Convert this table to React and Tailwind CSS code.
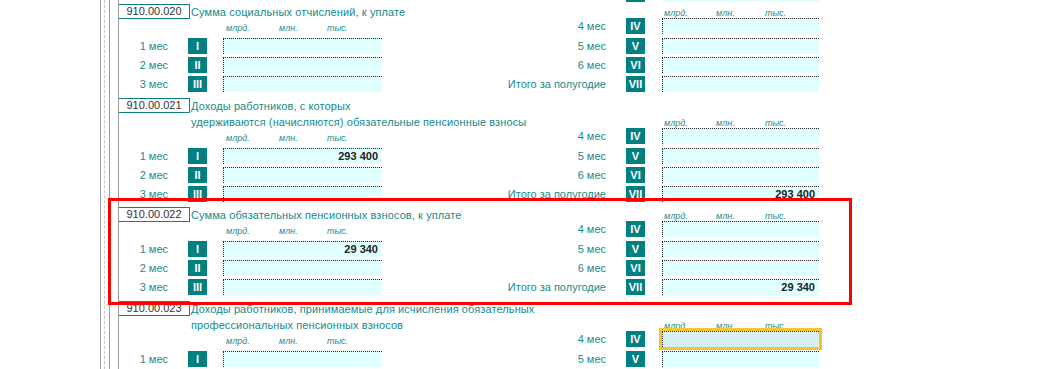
import React from 'react';

const sections = [
  {
    code: '910.00.020',
    title: ['Сумма социальных отчислений, к уплате'],
    values: {},
  },
  {
    code: '910.00.021',
    title: ['Доходы работников, с которых', 'удерживаются (начисляются) обязательные пенсионные взносы'],
    values: { I: '293 400', VII: '293 400' },
  },
  {
    code: '910.00.022',
    title: ['Сумма обязательных пенсионных взносов, к уплате'],
    values: { I: '29 340', VII: '29 340' },
  },
  {
    code: '910.00.023',
    title: ['Доходы работников, принимаемые для исчисления обязательных', 'профессиональных пенсионных взносов'],
    values: {},
    focus: 'IV',
  },
];

const leftRows = [
  ['1 мес', 'I'],
  ['2 мес', 'II'],
  ['3 мес', 'III'],
];

const rightRows = [
  ['5 мес', 'V'],
  ['6 мес', 'VI'],
  ['Итого за полугодие', 'VII'],
];

const Badge = ({ children }) => (
  <div className="flex h-[16px] w-[19px] shrink-0 items-center justify-center bg-[#008080] text-[11px] font-bold leading-none text-white">
    {children}
  </div>
);

const Field = ({ value, width, focused, className = '' }) => (
  <div
    className={`h-[16px] shrink-0 border-l border-t border-dotted border-[#222] pr-[4px] text-right text-[11px] font-bold leading-[15px] text-[#222] ${width} ${className} ${
      focused ? 'bg-[#d9f0f2] outline-3 outline-solid outline-[#f4c430]' : 'bg-[#e0ffff]'
    }`}
  >
    {value}
  </div>
);

const Units = ({ first, second }) => (
  <div className="flex text-[9px] italic leading-[10px] text-[#2a8a8a]">
    <span className={first}>млрд.</span>
    <span className={second}>млн.</span>
    <span>тыс.</span>
  </div>
);

const Section = ({ section }) => {
  const { code, title, values, focus } = section;
  return (
    <div className={`flex items-end ${title.length > 1 ? 'pb-[5px]' : 'pb-[6px]'}`}>
      <div className="flex w-[372px] shrink-0 flex-col">
        <div className="flex">
          <div className="flex h-[15px] w-[71px] shrink-0 items-center justify-center border-y border-r border-[#108080] text-[11px] leading-none text-[#333]">
            {code}
          </div>
          <div className="ml-[1px] whitespace-nowrap text-[11px] leading-[16px] tracking-[0.1px] text-[#138a8a]">
            {title.map((line) => (
              <div key={line}>{line}</div>
            ))}
          </div>
        </div>
        <div className="flex h-[18px] pl-[104px] pt-[3px]">
          <Units first="w-[56px] pl-[3px]" second="w-[48px]" />
        </div>
        <div className="flex flex-col gap-[3px]">
          {leftRows.map(([label, num]) => (
            <div key={num} className="flex h-[16px] items-center">
              <div className="w-[69px] shrink-0 pr-[20px] text-right text-[11px] text-[#178b8b]">{label}</div>
              <Badge>{num}</Badge>
              <Field value={values[num]} width="w-[159px]" className="ml-[16px]" />
            </div>
          ))}
        </div>
      </div>

      <div className="flex flex-col">
        <div className="h-[10px] pl-[171px]">
          <Units first="w-[54px] pl-[2px]" second="w-[49px]" />
        </div>
        <div className="flex h-[16px] items-center">
          <div className="w-[135px] shrink-0 pr-[20px] text-right text-[11px] text-[#178b8b]">4 мес</div>
          <Badge>IV</Badge>
          <Field value={values.IV} width="w-[157px]" className="ml-[17px]" focused={focus === 'IV'} />
        </div>
        <div className="mt-[4px] flex flex-col gap-[3px]">
          {rightRows.map(([label, num]) => (
            <div key={num} className="flex h-[16px] items-center">
              <div className="w-[135px] shrink-0 whitespace-nowrap pr-[20px] text-right text-[11px] text-[#178b8b]">{label}</div>
              <Badge>{num}</Badge>
              <Field value={values[num]} width="w-[157px]" className="ml-[17px]" />
            </div>
          ))}
        </div>
      </div>
    </div>
  );
};

export default function App() {
  return (
    <div className="relative h-[369px] w-[1056px] overflow-hidden bg-white font-['Liberation_Sans',Arial,sans-serif]">
      <div className="ml-[100px] flex h-full">
        <div className="w-[4px] shrink-0 border-l border-[#a0a0a0]" />
        <div className="w-[5px] shrink-0 border-l border-dashed border-[#c8c8c8]" />
        <div className="w-[9px] shrink-0 border-l border-[#a0a0a0]" />
        <div className="flex-1 border-l border-[#9a9a9a]">
          {/* tail of the previous block, scrolled out of view */}
          <div className="flex h-[2px]">
            <div className="w-[372px] shrink-0" />
            <div className="w-[135px] shrink-0" />
            <div className="w-[19px] shrink-0 bg-[#008080]" />
            <div className="ml-[17px] w-[157px] shrink-0 bg-[#e0ffff]" />
          </div>
          <div className="mt-[2px]">
            {sections.map((section) => (
              <Section key={section.code} section={section} />
            ))}
          </div>
        </div>
      </div>

      <div className="pointer-events-none absolute left-[108px] top-[198px] h-[107px] w-[744px] border-[3px] border-[#ff0000]" />
    </div>
  );
}
